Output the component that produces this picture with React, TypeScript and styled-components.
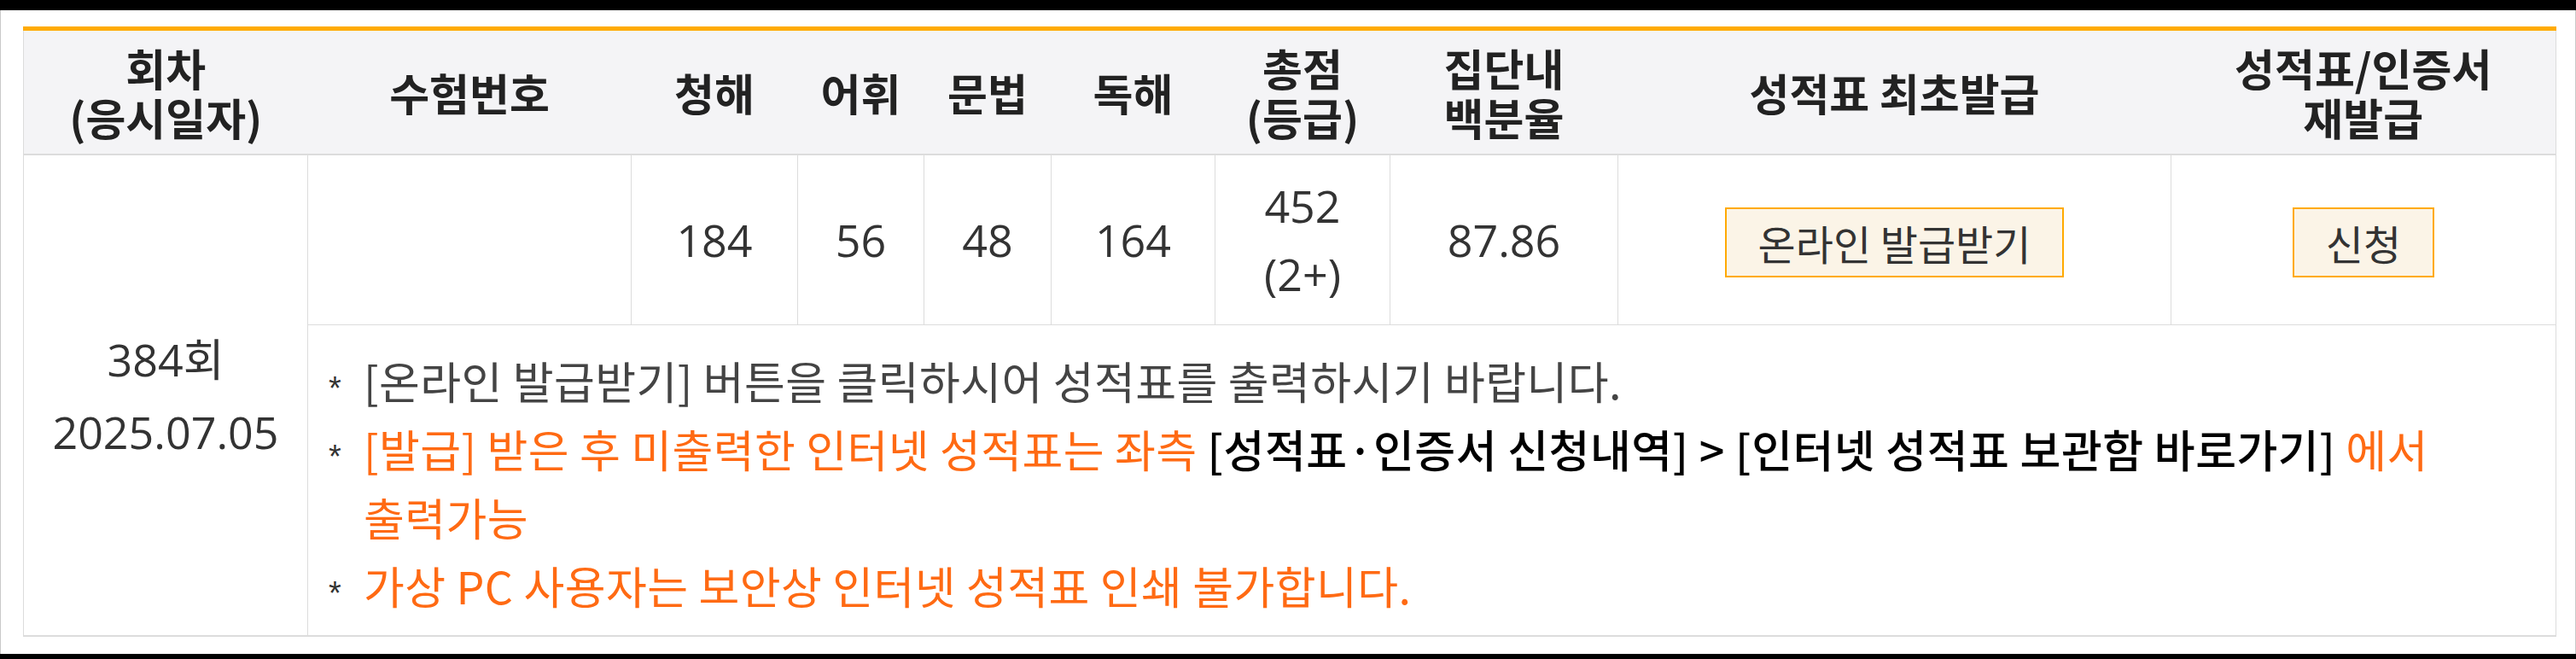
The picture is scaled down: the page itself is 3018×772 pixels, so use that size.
import React from "react";
import styled, { createGlobalStyle } from "styled-components";

const GlobalStyle = createGlobalStyle`
  html, body {
    margin: 0;
    padding: 0;
    background: #000;
  }
  body {
    font-family: "Open Sans", "Noto Sans CJK KR", "Noto Sans", sans-serif;
  }
`;

const Page = styled.div`
  margin-top: 12px;
  height: 754px;
  box-sizing: border-box;
  background: #fff;
  border-left: 1px solid #c9c9c9;
  border-right: 1px solid #c9c9c9;
  padding: 19px 23px 0 26px;
  overflow: hidden;
`;

const ScoreTable = styled.table`
  width: 100%;
  table-layout: fixed;
  border-collapse: collapse;
  border-top: 5px solid #ffab00;
  border-left: 1px solid #dcdcdc;
  border-right: 1px solid #dcdcdc;
  border-bottom: 2px solid #dcdcdc;
  color: #333;
`;

const Col = styled.col<{ $w: number }>`
  width: ${(p) => p.$w}px;
`;

const Th = styled.th`
  background: #f4f4f6;
  color: #222;
  font-family: "Noto Sans CJK KR", sans-serif;
  font-weight: 700;
  font-size: 51px;
  line-height: 58px;
  padding: 14px 0;
  text-align: center;
  vertical-align: middle;
  border-bottom: 2px solid #dcdcdc;
`;

const Td = styled.td<{ $lh?: number }>`
  font-size: 52px;
  line-height: ${(p) => p.$lh ?? 80}px;
  padding: 19px 0;
  text-align: center;
  vertical-align: middle;
  border: 1px solid #dcdcdc;
  color: #333;
`;

const ActionButton = styled.button`
  font-family: "Noto Sans CJK KR", sans-serif;
  font-size: 48px;
  line-height: 78px;
  height: 82px;
  margin: 0;
  padding: 0 37px;
  border: 2px solid #ffaa00;
  background: #fbf4e7;
  color: #333;
  cursor: pointer;
  vertical-align: middle;
`;

const NotesCell = styled.td`
  font-family: "Noto Sans CJK KR", sans-serif;
  font-size: 52px;
  line-height: 80px;
  letter-spacing: 0.4px;
  padding: 25px 40px 18px 24px;
  text-align: left;
  vertical-align: top;
  border: 1px solid #dcdcdc;
  word-break: keep-all;
`;

const NoteList = styled.ul`
  list-style: none;
  margin: 0;
  padding: 0;
`;

const NoteItem = styled.li`
  padding-left: 41px;
  text-indent: -41px;
  color: #444;
`;

const Marker = styled.span`
  display: inline-block;
  width: 41px;
  text-indent: 0;
  font-family: "Liberation Sans", sans-serif;
  font-size: 38px;
  line-height: 1;
  letter-spacing: 0;
  color: #333;
`;

const Warn = styled.span`
  color: #ff6a13;
`;

const Strong = styled.span`
  color: #000;
  font-weight: 500;
  letter-spacing: 0.5px;
`;

const colWidths = [333, 379, 195, 148, 149, 192, 205, 267, 648, 451];

export default function App() {
  return (
    <>
      <GlobalStyle />
      <Page>
        <ScoreTable>
          <colgroup>
            {colWidths.map((w, i) => (
              <Col key={i} $w={w} />
            ))}
          </colgroup>
          <thead>
            <tr>
              <Th>
                회차
                <br />
                (응시일자)
              </Th>
              <Th>수험번호</Th>
              <Th>청해</Th>
              <Th>어휘</Th>
              <Th>문법</Th>
              <Th>독해</Th>
              <Th>
                총점
                <br />
                (등급)
              </Th>
              <Th>
                집단내
                <br />
                백분율
              </Th>
              <Th>성적표 최초발급</Th>
              <Th>
                성적표/인증서
                <br />
                재발급
              </Th>
            </tr>
          </thead>
          <tbody>
            <tr>
              <Td rowSpan={2} $lh={85}>
                384회
                <br />
                2025.07.05
              </Td>
              <Td></Td>
              <Td>184</Td>
              <Td>56</Td>
              <Td>48</Td>
              <Td>164</Td>
              <Td>
                452
                <br />
                (2+)
              </Td>
              <Td>87.86</Td>
              <Td>
                <ActionButton type="button">온라인 발급받기</ActionButton>
              </Td>
              <Td>
                <ActionButton type="button">신청</ActionButton>
              </Td>
            </tr>
            <tr>
              <NotesCell colSpan={9}>
                <NoteList>
                  <NoteItem>
                    <Marker>*</Marker>[온라인 발급받기] 버튼을 클릭하시어 성적표를 출력하시기 바랍니다.
                  </NoteItem>
                  <NoteItem>
                    <Marker>*</Marker>
                    <Warn>[발급] 받은 후 미출력한 인터넷 성적표는 좌측 </Warn>
                    <Strong>[성적표·인증서 신청내역] &gt; [인터넷 성적표 보관함 바로가기]</Strong>
                    <Warn> 에서 출력가능</Warn>
                  </NoteItem>
                  <NoteItem>
                    <Marker>*</Marker>
                    <Warn>가상 PC 사용자는 보안상 인터넷 성적표 인쇄 불가합니다.</Warn>
                  </NoteItem>
                </NoteList>
              </NotesCell>
            </tr>
          </tbody>
        </ScoreTable>
      </Page>
    </>
  );
}
